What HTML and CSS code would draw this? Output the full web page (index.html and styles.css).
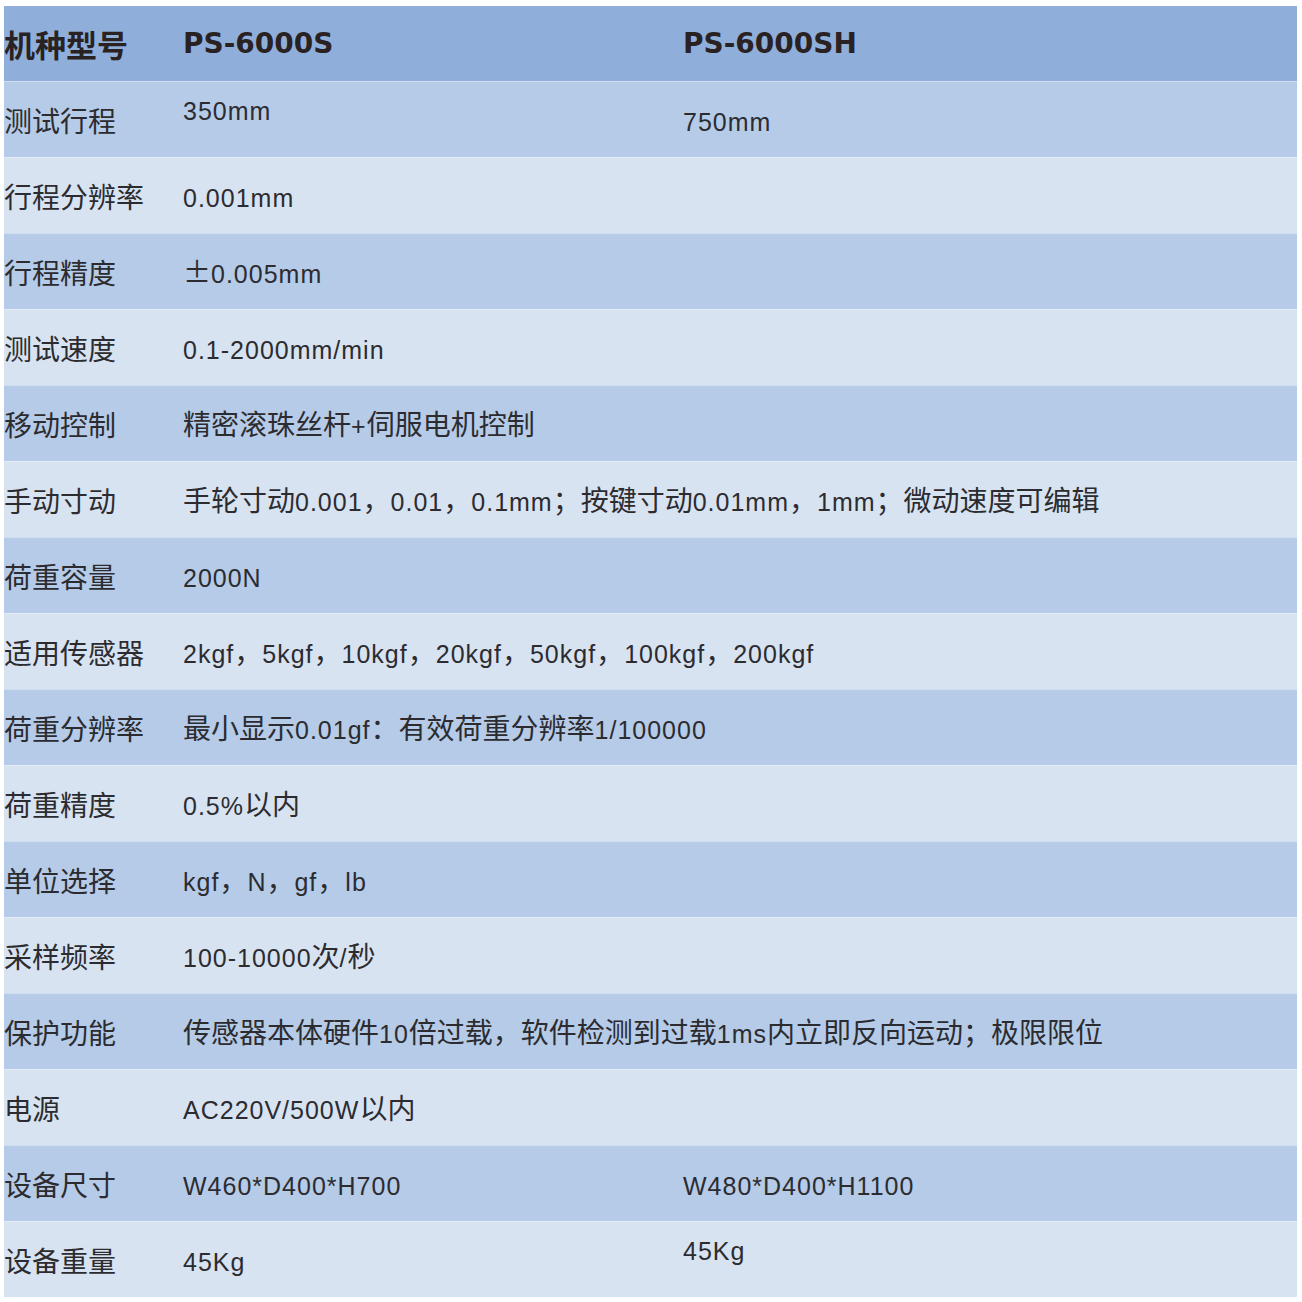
FILE: index.html
```html
<!DOCTYPE html>
<html lang="zh-CN">
<head>
<meta charset="utf-8">
<title>PS-6000S 规格</title>
<link rel="stylesheet" href="styles.css">
</head>
<body>
<div class="spec">
  <div class="row head">
    <div class="label">机种型号</div>
    <div class="model">PS-6000S</div>
    <div class="model">PS-6000SH</div>
  </div>
  <div class="row dark">
    <div class="label">测试行程</div>
    <div class="val up"><span class="n">350mm</span></div>
    <div class="val"><span class="n">750mm</span></div>
  </div>
  <div class="row light">
    <div class="label">行程分辨率</div>
    <div class="val span"><span class="n">0.001mm</span></div>
  </div>
  <div class="row dark">
    <div class="label">行程精度</div>
    <div class="val span">±<span class="n">0.005mm</span></div>
  </div>
  <div class="row light">
    <div class="label">测试速度</div>
    <div class="val span"><span class="n">0.1-2000mm/min</span></div>
  </div>
  <div class="row dark">
    <div class="label">移动控制</div>
    <div class="val span">精密滚珠丝杆<span class="n">+</span>伺服电机控制</div>
  </div>
  <div class="row light">
    <div class="label">手动寸动</div>
    <div class="val span">手轮寸动<span class="n">0.001</span>，<span class="n">0.01</span>，<span class="n">0.1mm</span>；按键寸动<span class="n">0.01mm</span>，<span class="n">1mm</span>；微动速度可编辑</div>
  </div>
  <div class="row dark">
    <div class="label">荷重容量</div>
    <div class="val span"><span class="n">2000N</span></div>
  </div>
  <div class="row light">
    <div class="label">适用传感器</div>
    <div class="val span"><span class="n">2kgf</span>，<span class="n">5kgf</span>，<span class="n">10kgf</span>，<span class="n">20kgf</span>，<span class="n">50kgf</span>，<span class="n">100kgf</span>，<span class="n">200kgf</span></div>
  </div>
  <div class="row dark">
    <div class="label">荷重分辨率</div>
    <div class="val span">最小显示<span class="n">0.01gf</span>：有效荷重分辨率<span class="n">1/100000</span></div>
  </div>
  <div class="row light">
    <div class="label">荷重精度</div>
    <div class="val span"><span class="n">0.5%</span>以内</div>
  </div>
  <div class="row dark">
    <div class="label">单位选择</div>
    <div class="val span"><span class="n">kgf</span>，<span class="n">N</span>，<span class="n">gf</span>，<span class="n">lb</span></div>
  </div>
  <div class="row light">
    <div class="label">采样频率</div>
    <div class="val span"><span class="n">100-10000</span>次<span class="n">/</span>秒</div>
  </div>
  <div class="row dark">
    <div class="label">保护功能</div>
    <div class="val span">传感器本体硬件<span class="n">10</span>倍过载，软件检测到过载<span class="n">1ms</span>内立即反向运动；极限限位</div>
  </div>
  <div class="row light">
    <div class="label">电源</div>
    <div class="val span"><span class="n">AC220V/500W</span>以内</div>
  </div>
  <div class="row dark">
    <div class="label">设备尺寸</div>
    <div class="val"><span class="n">W460*D400*H700</span></div>
    <div class="val"><span class="n">W480*D400*H1100</span></div>
  </div>
  <div class="row light">
    <div class="label">设备重量</div>
    <div class="val"><span class="n">45Kg</span></div>
    <div class="val up"><span class="n">45Kg</span></div>
  </div>
</div>
</body>
</html>
```
FILE: styles.css
```css
html, body {
  margin: 0;
  padding: 0;
  background: #ffffff;
}

.spec {
  margin: 6px 5px 0 4px;
  width: 1293px;
  font-family: "Noto Sans CJK SC", "Noto Sans", sans-serif;
  color: #2c2c30;
}

.row {
  display: grid;
  grid-template-columns: 179px 500px 1fr;
  align-items: center;
  height: 76px;
  box-sizing: border-box;
  border-top: 1px solid rgba(255, 255, 255, 0.35);
}

.row.head {
  height: 75px;
  border-top: none;
  background: #8fafda;
}

.row.dark {
  background: #b5cbe8;
}

.row.light {
  background: #d8e3f2;
}

.label {
  font-size: 28px;
  line-height: 1;
  white-space: nowrap;
}

.head .label {
  font-size: 31px;
  font-weight: 700;
  color: #2a2222;
}

.model {
  font-family: "DejaVu Sans", "Noto Sans", sans-serif;
  font-weight: 700;
  font-size: 28px;
  color: #2a2222;
  line-height: 1;
}

.val {
  font-size: 28px;
  line-height: 1;
  white-space: nowrap;
}

.val.span {
  grid-column: 2 / 4;
}

.val.up {
  padding-bottom: 22px;
}

.n {
  font-family: "Liberation Sans", "Arial", sans-serif;
  font-size: 25px;
  letter-spacing: 1px;
}
```
